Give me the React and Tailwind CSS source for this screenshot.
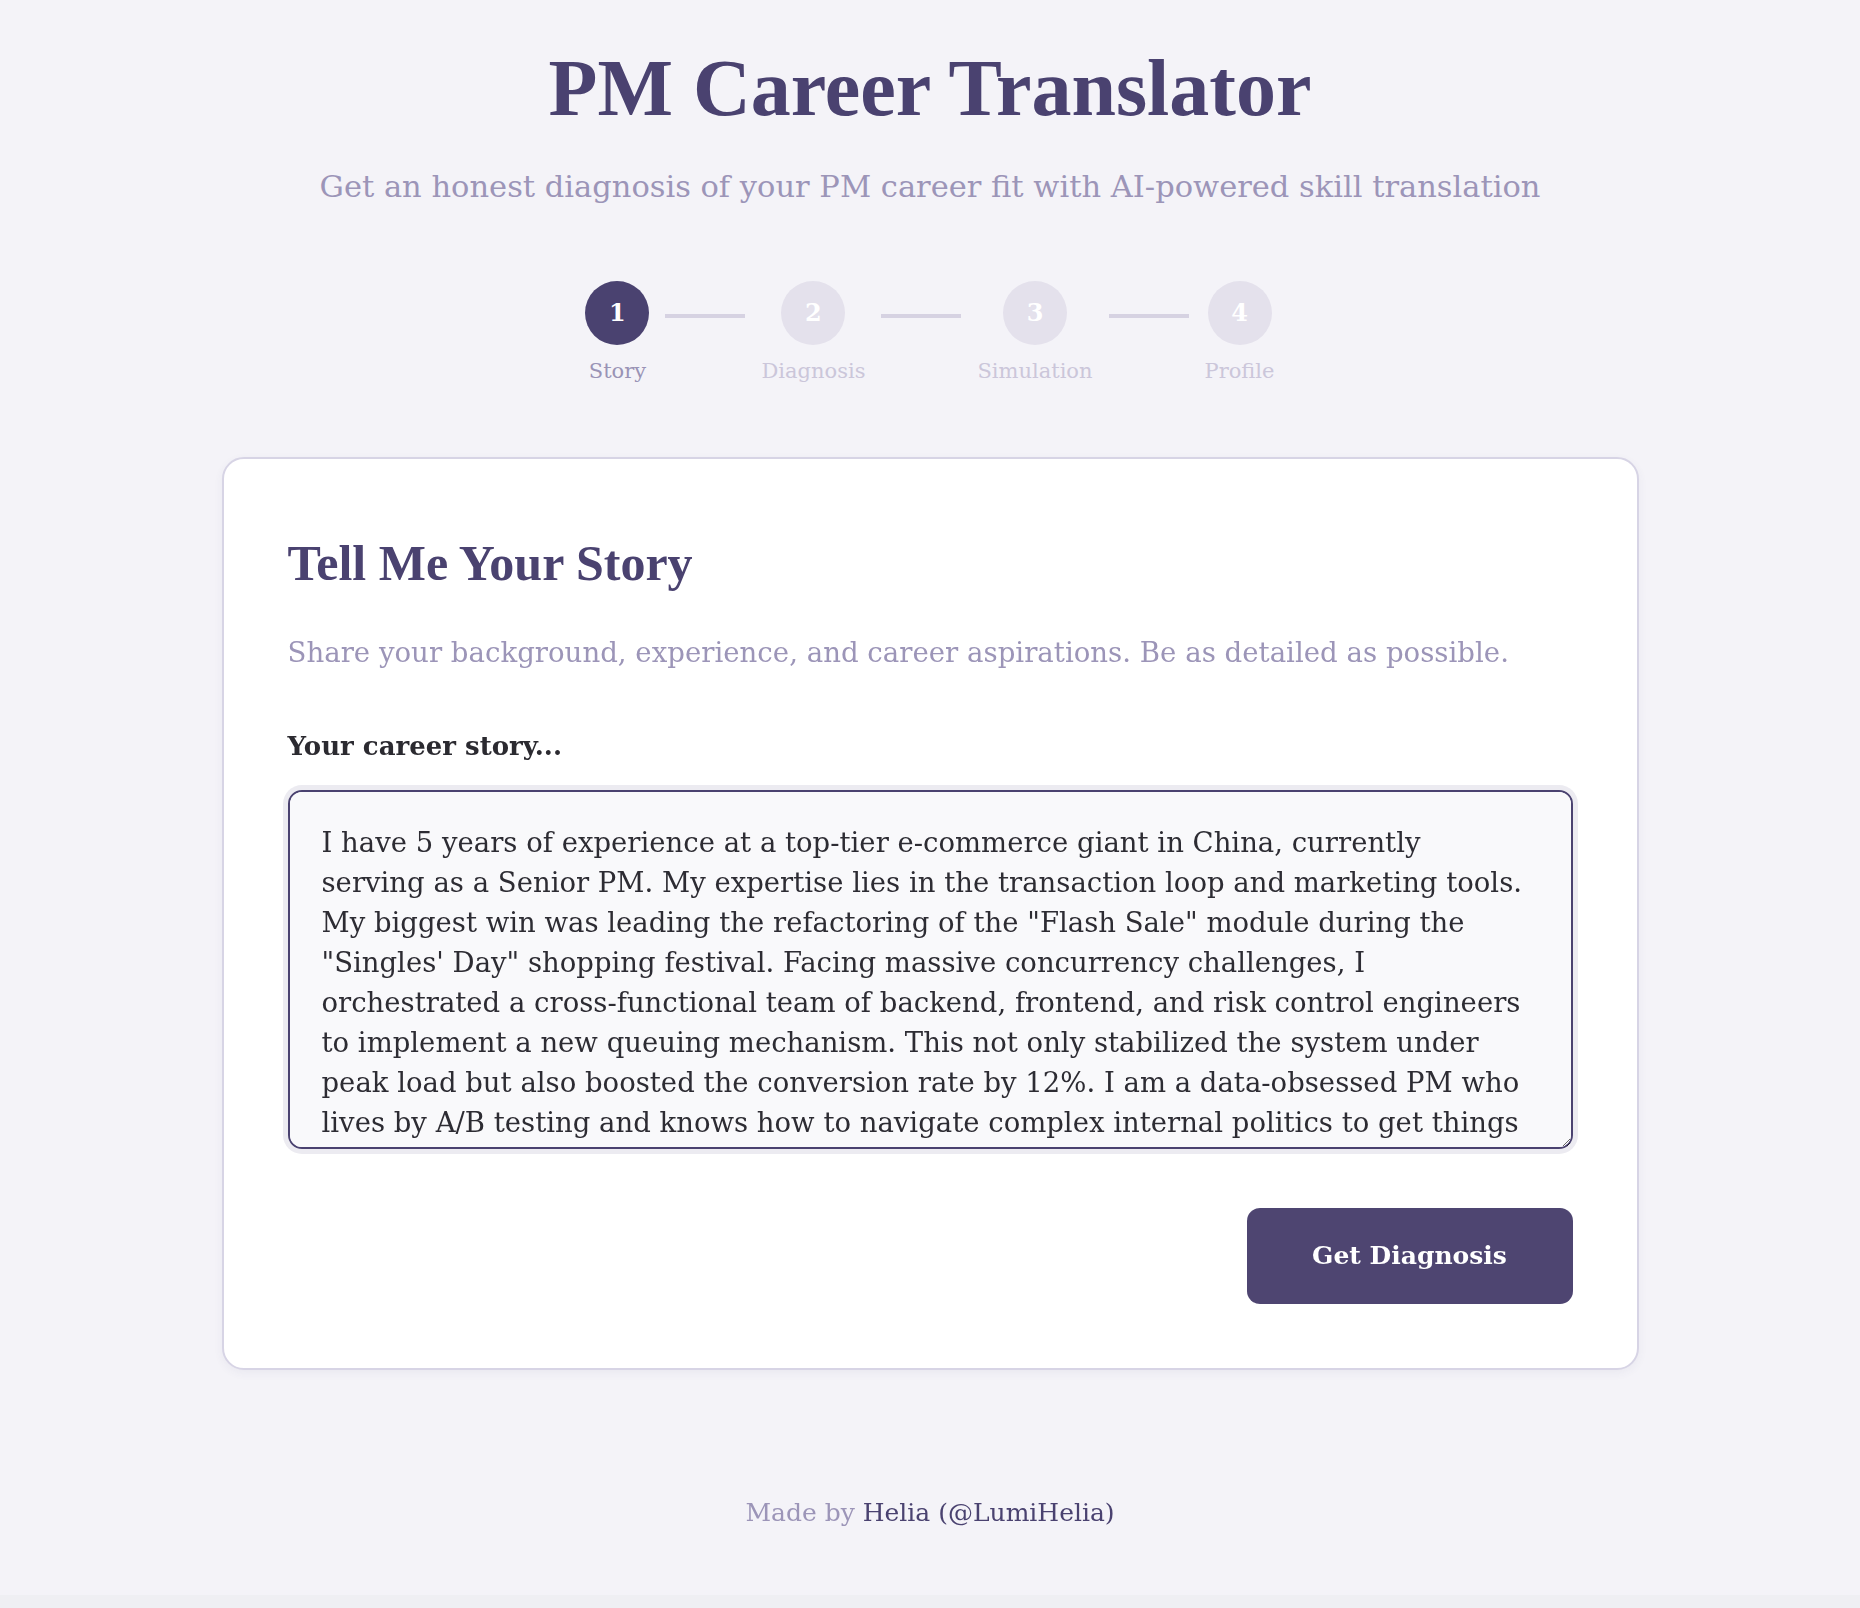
import React, { useState } from 'react';

const serif = "font-['DejaVu_Serif',serif]";
const display = "font-['Liberation_Serif','Times_New_Roman',serif]";

const steps = [
  { n: 1, label: 'Story', active: true },
  { n: 2, label: 'Diagnosis' },
  { n: 3, label: 'Simulation' },
  { n: 4, label: 'Profile' },
];

const story = [
  'I have 5 years of experience at a top-tier e-commerce giant in China, currently',
  'serving as a Senior PM. My expertise lies in the transaction loop and marketing tools.',
  'My biggest win was leading the refactoring of the "Flash Sale" module during the',
  '"Singles\' Day" shopping festival. Facing massive concurrency challenges, I',
  'orchestrated a cross-functional team of backend, frontend, and risk control engineers',
  'to implement a new queuing mechanism. This not only stabilized the system under',
  'peak load but also boosted the conversion rate by 12%. I am a data-obsessed PM who',
  'lives by A/B testing and knows how to navigate complex internal politics to get things',
  'done.',
].join('\n');

const Stepper = () => (
  <div className="mt-[76px] flex items-start gap-4">
    {steps.map((s, i) => (
      <React.Fragment key={s.n}>
        {i > 0 && <div className="mt-[33px] h-[4px] w-[80px] bg-[#d6d2e2]" />}
        <div className="flex flex-col items-center">
          <div
            className={
              s.active
                ? `flex h-[64px] w-[64px] items-center justify-center rounded-full bg-[#4a4270] text-[24px] font-bold text-white ${serif}`
                : `flex h-[64px] w-[64px] items-center justify-center rounded-full bg-[#e4e1ec] text-[24px] font-bold text-white ${serif}`
            }
          >
            {s.n}
          </div>
          <div
            className={
              s.active
                ? `mt-[14px] text-[21px] leading-[25px] text-[#9a93b6] ${serif}`
                : `mt-[14px] text-[21px] leading-[25px] text-[#cbc6da] ${serif}`
            }
          >
            {s.label}
          </div>
        </div>
      </React.Fragment>
    ))}
  </div>
);

export default function App() {
  const [text, setText] = useState(story);

  return (
    <div className="min-h-screen bg-[#efeff3]">
      <div className="flex flex-col items-center bg-[#f4f3f8] pt-[48px] pb-[64px]">
        <h1 className={`text-[80px] font-bold leading-[80px] text-[#4a4270] ${display}`}>
          PM Career Translator
        </h1>
        <p className={`mt-[40px] text-[30.5px] leading-[37px] text-[#9c95b8] ${serif}`}>
          Get an honest diagnosis of your PM career fit with AI-powered skill translation
        </p>

        <Stepper />

        {/* story card */}
        <div className="mt-[73px] w-[1417px] rounded-[22px] border-2 border-[#d7d4e5] bg-white px-[64px] pt-[75px] pb-[64px] shadow-[0_3px_10px_rgba(74,66,112,0.06)]">
          <h2 className={`text-[50px] font-bold leading-[58px] text-[#4a4270] ${display}`}>
            Tell Me Your Story
          </h2>
          <p className={`mt-[40px] text-[27.6px] leading-[42px] text-[#9c95b8] ${serif}`}>
            Share your background, experience, and career aspirations. Be as detailed as possible.
          </p>

          <label className={`mt-[57px] block text-[26px] font-bold leading-[30px] text-[#2b2a30] ${serif}`}>
            Your career story...
          </label>
          <textarea
            value={text}
            onChange={(e) => setText(e.target.value)}
            className={`mt-[29px] block h-[359px] w-full overflow-auto [scrollbar-width:none] rounded-[14px] border-2 border-[#4a4270] bg-[#f9f9fb] pt-[30px] pr-[24px] pl-[32px] text-[27.5px] leading-[40px] text-[#2d2c33] shadow-[0_0_0_5px_#ecebf1] outline-none ${serif}`}
          />

          <div className="mt-[59px] flex justify-end">
            <button className={`h-[96px] w-[326px] rounded-[13px] bg-[#4e4571] text-[25px] font-bold text-white ${serif}`}>
              Get Diagnosis
            </button>
          </div>
        </div>

        <footer className={`mt-[124px] text-[25px] leading-[37px] text-[#9c95b8] ${serif}`}>
          Made by <span className="text-[#4a4270]">Helia (@LumiHelia)</span>
        </footer>
      </div>
    </div>
  );
}
